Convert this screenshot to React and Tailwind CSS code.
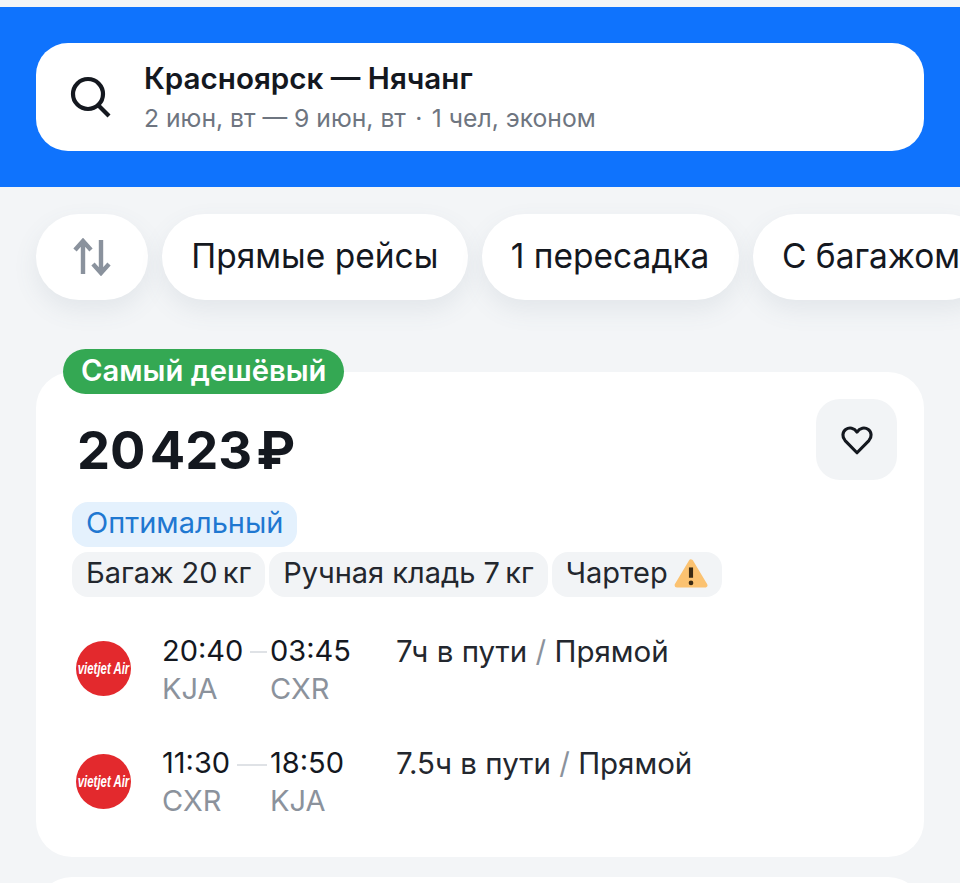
import React from 'react';

const VietjetLogo = () => (
    <svg viewBox="0 0 55 55" className="w-[55px] h-[55px] shrink-0">
        <circle cx="27.5" cy="27.5" r="27.5" fill="#e3292d" />
        <text transform="translate(27.5 32.5) scale(1 1.4)" textAnchor="middle" fill="#fff" fontSize="11.4" fontWeight="700" fontStyle="italic" fontFamily="'Liberation Sans', sans-serif">vietjet Air</text>
    </svg>
);

const Tag = ({ children, className = 'bg-[#f2f4f6] text-[#23272e]' }) => (
    <div className={`h-[45px] px-[14px] pb-[3px] rounded-[16px] flex items-center text-[29px] whitespace-nowrap ${className}`}>
        {children}
    </div>
);

const Chip = ({ children }) => (
    <div className="h-[86px] px-[29.25px] pb-[2px] shrink-0 rounded-full bg-white flex items-center text-[33.5px] text-[#14181f] whitespace-nowrap shadow-[0_10px_24px_rgba(90,105,125,0.1)]">
        {children}
    </div>
);

const FlightRow = ({ from, to, fromCode, toCode, lineWidth, info, stops, textTop }) => (
    <div className="flex items-start h-[113px]">
        <div className="pt-[13px] pl-[4px] w-[90px] shrink-0">
            <VietjetLogo />
        </div>
        <div className={`w-[108px] shrink-0 text-[29px] leading-[38px] ${textTop}`}>
            <div className="text-[#14181f]">{from}</div>
            <div className="text-[#8b929c]">{fromCode}</div>
        </div>
        <div className={`w-[126px] shrink-0 text-[29px] leading-[38px] relative ${textTop}`}>
            <div className={`absolute top-[23px] right-[calc(100%+3px)] h-[2px] bg-[#dfe2e6] ${lineWidth}`}></div>
            <div className="text-[#14181f]">{to}</div>
            <div className="text-[#8b929c]">{toCode}</div>
        </div>
        <div className={`text-[29.5px] leading-[38px] text-[#23272e] whitespace-nowrap ${textTop}`}>
            {info} <span className="text-[#8b929c]">/</span> {stops}
        </div>
    </div>
);

export default function App() {
    return (
        <div className="w-[960px] h-[883px] overflow-hidden bg-[#f3f5f7] pt-[7px] font-['Inter',sans-serif]">
            {/* Шапка с поиском */}
            <div className="h-[180px] bg-[#0f73fd] px-[36px] pt-[36px]">
                <div className="h-[108px] bg-white rounded-[32px] flex items-center">
                    <svg viewBox="0 0 44 44" className="w-[44px] h-[44px] ml-[32px] mr-[32px]" fill="none" stroke="#14181f" strokeWidth="4.2">
                        <circle cx="20" cy="19" r="15" />
                        <path d="M30 30 L41 41" />
                    </svg>
                    <div>
                        <div className="text-[29.6px] leading-[36px] font-semibold text-[#14181f]">Красноярск — Нячанг</div>
                        <div className="text-[24.7px] leading-[34px] mt-[5px] text-[#6e7580]">2 июн, вт — 9 июн, вт<span className="mx-[2.5px]"> · </span>1 чел, эконом</div>
                    </div>
                </div>
            </div>

            {/* Фильтры */}
            <div className="flex gap-[14px] pl-[36px] pt-[27px]">
                <div className="w-[112px] h-[86px] shrink-0 rounded-full bg-white flex items-center justify-center shadow-[0_10px_24px_rgba(90,105,125,0.1)]">
                    <svg viewBox="0 0 38 38" className="w-[38px] h-[38px]" fill="none" stroke="#8a929d" strokeWidth="4.4">
                        <path d="M10 36 V4 M2 12 L10 3 L18 12" />
                        <path d="M28 2 V34 M20 26 L28 35 L36 26" />
                    </svg>
                </div>
                <Chip>Прямые рейсы</Chip>
                <Chip>1 пересадка</Chip>
                <Chip>С багажом</Chip>
            </div>

            {/* Карточка билета */}
            <div className="relative mt-[72px] mx-[36px] h-[485px] bg-white rounded-[36px] pt-[46px] pl-[36px]">
                <div className="absolute -top-[23px] left-[27px] h-[45px] px-[18px] pb-[1px] rounded-full bg-[#34a853] text-white text-[29.2px] font-semibold flex items-center whitespace-nowrap">
                    Самый дешёвый
                </div>
                <div className="absolute top-[27px] right-[27px] w-[81px] h-[81px] rounded-[24px] bg-[#f2f4f6] flex items-center justify-center">
                    <svg viewBox="0 0 24 24" className="w-[34px] h-[34px]" fill="none" stroke="#14181f" strokeWidth="2.2" strokeLinejoin="round">
                        <path d="M12 21 L3.6 12.4 C1.4 10 1.6 6.4 4 4.6 C6.6 2.7 10 3.4 12 6.4 C14 3.4 17.4 2.7 20 4.6 C22.4 6.4 22.6 10 20.4 12.4 Z" />
                    </svg>
                </div>

                <div className="pl-[5px] text-[52.5px] leading-[64px] font-bold text-[#14181f]">20{'\u200a'}423{'\u200a'}₽</div>

                <div className="mt-[20px] flex flex-col gap-[5px] items-start">
                    <Tag className="bg-[#e4f1fd] text-[#1f78d1]">Оптимальный</Tag>
                    <div className="flex gap-[4px]">
                        <Tag>Багаж 20{'\u2009'}кг</Tag>
                        <Tag>Ручная кладь 7{'\u2009'}кг</Tag>
                        <Tag>
                            Чартер
                            <svg viewBox="0 0 36 32" className="w-[34px] h-[30px] ml-[6px] mt-[1px]">
                                <path d="M18 3 L33 28 H3 Z" fill="#fbc271" stroke="#fbc271" strokeWidth="5" strokeLinejoin="round" />
                                <path d="M18 9 V20" stroke="#3a2a14" strokeWidth="4.4" />
                                <circle cx="18" cy="25.5" r="2.5" fill="#3a2a14" />
                            </svg>
                        </Tag>
                    </div>
                </div>

                <div className="mt-[31px]">
                    <FlightRow from="20:40" to="03:45" fromCode="KJA" toCode="CXR" lineWidth="w-[17px]" info="7ч в пути" stops="Прямой" textTop="pt-[4px]" />
                    <FlightRow from="11:30" to="18:50" fromCode="CXR" toCode="KJA" lineWidth="w-[30px]" info="7.5ч в пути" stops="Прямой" textTop="pt-[3px]" />
                </div>
            </div>

            {/* Следующая карточка */}
            <div className="mt-[20px] mx-[36px] h-[100px] bg-white rounded-[36px]"></div>
        </div>
    );
}
